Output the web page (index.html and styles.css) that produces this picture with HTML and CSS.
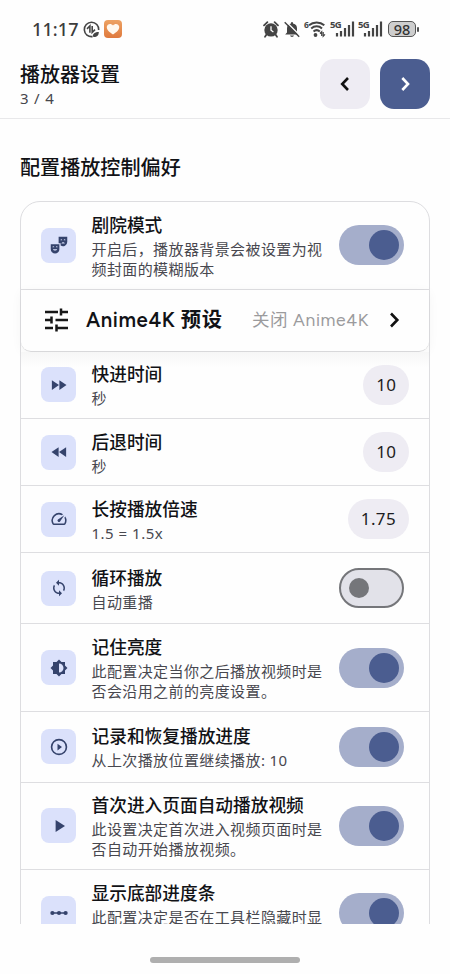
FILE: index.html
```html
<!DOCTYPE html>
<html lang="zh-CN">
<head>
<meta charset="utf-8">
<meta name="viewport" content="width=device-width, initial-scale=1">
<title>播放器设置</title>
<link rel="stylesheet" href="styles.css">
</head>
<body>
<div class="status">
  <span class="clock">11:17</span>
  <svg class="s-data" width="17" height="17" viewBox="0 0 17 17" fill="none" stroke="#444" stroke-width="1.6"><path d="M9.5 15.6A7.2 7.2 0 1 1 15.7 9"/><path d="M4 7.8 6.9 5V11.7M9.2 5V11.4L12 8.7" stroke-width="1.6"/><path d="M9.8 15.8C9.5 12.5 12 11 15.8 10.9 16 14.3 13.4 16.4 9.8 15.8Z" fill="#444" stroke="none"/></svg>
  <svg class="s-app" width="18" height="18" viewBox="0 0 18 18"><defs><linearGradient id="o" x2="0" y2="1"><stop stop-color="#eda263"/><stop offset="1" stop-color="#df793d"/></linearGradient></defs><rect width="18" height="18" rx="4" fill="url(#o)"/><path d="M9 14.5C5 12 2.5 9.8 2.8 6.8 3.1 3.8 7 2.8 9 5.5 11 2.8 14.9 3.8 15.2 6.8 15.5 9.8 13 12 9 14.5Z" fill="#fff8ee"/></svg>
  <span class="spacer"></span>
  <svg width="16" height="17" viewBox="0 0 16 17"><circle cx="8" cy="8.9" r="6.7" fill="#444"/><path d="M1 4.3 4.4 1.2M15 4.3 11.6 1.2M3.5 13.5 2 15.7M12.5 13.5 14 15.7" stroke="#444" stroke-width="1.8" stroke-linecap="round"/><path d="M8 5.2V9.2L10.4 11" stroke="#fff" stroke-width="1.3" fill="none"/></svg>
  <svg class="s-bell" width="16" height="17" viewBox="0 0 16 17"><path d="M7 1.3h2v1.2C12 3 13 5 13 7.5v4l1.8 2H1.2l1.8-2v-4C3 5 4 3 7 2.5ZM6 14.5h4C9.6 16.4 6.4 16.4 6 14.5Z" fill="#444"/><path d="M1.5 0 16.5 15" stroke="#fff" stroke-width="1.4"/><path d="M.7 1.2 15.2 15.7" stroke="#444" stroke-width="1.4"/></svg>
  <svg class="s-wifi" width="22" height="18" viewBox="0 0 22 18"><text x="0" y="7.5" class="tiny">6</text><g fill="none" stroke="#444" stroke-width="2"><path d="M5 5.2C9.3 1.5 16 1.5 20.3 5.2M7.2 8.4C10.4 5.6 15 5.6 18 8.4M9.5 11.6C11.4 9.9 14 9.9 15.8 11.6"/></g><circle cx="11.5" cy="15" r="1.9" fill="#444"/><path d="M16 13.5 17.7 11.8V16M19.2 12V16.2L21 14.3" fill="none" stroke="#444" stroke-width="1.2"/></svg>
  <svg class="s-sig" width="24" height="18" viewBox="0 0 24 18"><text x="0" y="8" class="tiny g">5G</text><path d="M7 16.5V13M11 16.5V11M15 16.5V8M19 16.5V5M23 16.5V1.5" stroke="#444" stroke-width="2.2"/></svg>
  <svg class="s-sig" width="24" height="18" viewBox="0 0 24 18"><text x="0" y="8" class="tiny g">5G</text><path d="M7 16.5V13M11 16.5V11M15 16.5V8M19 16.5V5M23 16.5V1.5" stroke="#444" stroke-width="2.2"/></svg>
  <span class="battery">98</span><span class="cap"></span>
</div>

<header class="header">
  <div class="heading"><h1>播放器设置</h1><p>3 / 4</p></div>
  <button class="nav"><svg width="20" height="20" viewBox="0 0 20 20"><path d="M13 4 7.2 10 13 16"/></svg></button>
  <button class="nav next"><svg width="20" height="20" viewBox="0 0 20 20"><path d="M7.3 4 13 10 7.3 16"/></svg></button>
</header>

<main class="content">
  <h2>配置播放控制偏好</h2>
  <section class="card">
    <div class="row tall first">
      <span class="icon"><svg viewBox="0 0 24 24"><path fill-rule="evenodd" d="M1 11h11.5v6.5a5.75 5.75 0 0 1-11.5 0ZM3.3 15h2.4a1.2 1.2 0 0 0-2.4 0ZM7.8 15h2.4a1.2 1.2 0 0 0-2.4 0ZM3.9 17.5c1 2.6 4.7 2.6 5.7 0Z"/><path fill-rule="evenodd" d="M11.5 1H23v7a5.7 5.7 0 0 1-8.8 4.8V9.5H11.5ZM14 5.5h2.3a1.1 1.1 0 0 0-2.3 0ZM18.3 5.5h2.3a1.1 1.1 0 0 0-2.3 0ZM15.2 10h4.6c-.8-2.2-3.8-2.2-4.6 0Z"/></svg></span>
      <div class="text"><h3>剧院模式</h3><p>开启后，播放器背景会被设置为视频封面的模糊版本</p></div>
      <span class="switch on"></span>
    </div>
    <div class="preset">
      <svg width="24" height="24" viewBox="0 0 24 24" fill="none" stroke="#171717" stroke-width="2.5"><path d="M1 4H14M17 .5V7.5M17 4H24M1 12H7M7.5 8.5V15.5M11.5 12H24M1 20H9M12.5 16.5V23.5M12.5 20H24"/></svg>
      <h3>Anime4K 预设</h3><span class="value">关闭 Anime4K</span>
      <svg class="chev" width="20" height="20" viewBox="0 0 20 20"><path d="M7 3.5 13.3 10 7 16.5"/></svg>
    </div>
    <div class="row shaded">
      <span class="icon"><svg viewBox="0 0 24 24"><path d="m2.5 5.5 9.5 6.5-9.5 6.5ZM12.5 5.5l9.5 6.5-9.5 6.5Z"/></svg></span>
      <div class="text"><h3>快进时间</h3><p>秒</p></div><span class="pill">10</span>
    </div>
    <div class="row">
      <span class="icon"><svg viewBox="0 0 24 24"><path d="m21.5 5.5-9.5 6.5 9.5 6.5ZM11.5 5.5l-9.5 6.5 9.5 6.5Z"/></svg></span>
      <div class="text"><h3>后退时间</h3><p>秒</p></div><span class="pill">10</span>
    </div>
    <div class="row">
      <span class="icon"><svg viewBox="0 0 24 24"><path d="m20.38 8.57-1.23 1.85a8 8 0 0 1-.22 7.58H5.07A8 8 0 0 1 15.58 6.85l1.85-1.23A10 10 0 0 0 3.35 19a2 2 0 0 0 1.72 1h13.85a2 2 0 0 0 1.74-1 10 10 0 0 0-.27-10.44Z"/><path d="M10.59 15.41a2 2 0 0 0 2.83 0l5.66-8.49-8.49 5.66a2 2 0 0 0 0 2.83Z"/></svg></span>
      <div class="text"><h3>长按播放倍速</h3><p class="latin">1.5 = 1.5x</p></div><span class="pill wide">1.75</span>
    </div>
    <div class="row mid">
      <span class="icon"><svg viewBox="0 0 24 24"><path d="M12 4V1L8 5l4 4V6c3.31 0 6 2.69 6 6 0 1.01-.25 1.97-.7 2.8l1.46 1.46A7.93 7.93 0 0 0 20 12c0-4.42-3.58-8-8-8Zm0 14c-3.31 0-6-2.69-6-6 0-1.01.25-1.97.7-2.8L5.24 7.74A7.93 7.93 0 0 0 4 12c0 4.42 3.58 8 8 8v3l4-4-4-4v3Z"/></svg></span>
      <div class="text"><h3>循环播放</h3><p>自动重播</p></div><span class="switch"></span>
    </div>
    <div class="row tall">
      <span class="icon"><svg viewBox="0 0 24 24"><path fill-rule="evenodd" d="M20 15.31 23.31 12 20 8.69V4h-4.69L12 .69 8.69 4H4v4.69L.69 12 4 15.31V20h4.69L12 23.31 15.31 20H20v-4.69ZM12 18V6c3.31 0 6 2.69 6 6s-2.69 6-6 6Z"/></svg></span>
      <div class="text"><h3>记住亮度</h3><p>此配置决定当你之后播放视频时是否会沿用之前的亮度设置。</p></div><span class="switch on"></span>
    </div>
    <div class="row mid">
      <span class="icon"><svg viewBox="0 0 24 24"><path fill-rule="evenodd" d="M10 16.5l6-4.5-6-4.5v9ZM12 1a11 11 0 1 0 0 22 11 11 0 0 0 0-22Zm0 19.8a8.8 8.8 0 1 1 0-17.6 8.8 8.8 0 0 1 0 17.6Z"/></svg></span>
      <div class="text"><h3>记录和恢复播放进度</h3><p>从上次播放位置继续播放: 10</p></div><span class="switch on"></span>
    </div>
    <div class="row tall">
      <span class="icon"><svg viewBox="0 0 24 24"><path d="M7.5 4v16L20 12Z"/></svg></span>
      <div class="text"><h3>首次进入页面自动播放视频</h3><p>此设置决定首次进入视频页面时是否自动开始播放视频。</p></div><span class="switch on"></span>
    </div>
    <div class="row tall">
      <span class="icon"><svg viewBox="0 0 24 24"><path d="M3 11h18v2H3Z"/><circle cx="3.2" cy="12" r="2.8"/><circle cx="12" cy="12" r="2.8"/><circle cx="20.8" cy="12" r="2.8"/></svg></span>
      <div class="text"><h3>显示底部进度条</h3><p class="two-lines">此配置决定是否在工具栏隐藏时显</p></div><span class="switch on"></span>
    </div>
  </section>
</main>
<footer class="home"><span></span></footer>
</body>
</html>
```

FILE: styles.css
```css
* { box-sizing: border-box; }
body {
  margin: 0; width: 450px; height: 974px; overflow: hidden;
  display: flex; flex-direction: column;
  background: #fefefe; color: #111216;
  font-family: "Noto Sans", "Noto Sans CJK SC", sans-serif;
}
h1, h2, h3, p { margin: 0; font-weight: 500; }
h1, h2, h3 { font-family: "Noto Sans CJK SC", sans-serif; }
.status { height: 58px; flex: none; display: flex; align-items: center; padding: 0 31px 0 32px; }
.status svg { overflow: visible; }
.clock { width: 51px; font: 500 18px/20px "Noto Sans"; color: #3c3c3c; letter-spacing: .1px; }
.s-app { margin-left: 4px; }
.spacer { flex: 1; }
.s-bell { margin-left: 5px; }
.s-wifi { margin-left: 4px; }
.s-sig { margin-left: 4px; }
.tiny { font: 700 8.5px "Noto Sans"; fill: #444; letter-spacing: -.3px; }
.g { font-size: 9.5px; letter-spacing: -.8px; }
.battery {
  width: 28px; height: 16px; margin-left: 6px; border: 1.5px solid #555; border-radius: 5px;
  background: #cecece; color: #333; font: 500 14.5px/14px "Noto Sans"; text-align: center;
}
.cap { width: 2px; height: 5px; margin-left: 1px; background: #555; border-radius: 1px; }
.header {
  height: 61px; flex: none; display: flex; gap: 10px; padding: 1px 20px 0;
  border-bottom: 1px solid #e8e8ea;
}
.heading { flex: 1; padding-top: 1px; }
h1 { font-size: 20px; line-height: 28px; }
.heading p { font-size: 15px; line-height: 20px; color: #46464c; letter-spacing: .8px; font-weight: 400; }
.nav {
  width: 50px; height: 50px; padding: 0; border: 0; border-radius: 14px; background: #eeecf3;
  display: grid; place-items: center;
}
.nav path, .chev path { fill: none; stroke: #111; stroke-width: 2.6; }
.next { background: #4b5d90; }
.nav.next path { stroke: #fff; }
.content { height: 805px; flex: none; overflow: hidden; padding: 0 20px; }
h2 { height: 82px; padding-top: 33px; font-size: 20.1px; line-height: 29px; }
.card { border: 1px solid #dddde0; border-radius: 20px 20px 0 0; }
.row {
  height: 67.2px; padding: 0 20px; display: flex; align-items: center;
  border-bottom: 1px solid #dedee1;
}
.mid { height: 71.1px; }
.tall { height: 87.3px; }
.first { height: 87.8px; }
.shaded { background: linear-gradient(#f6f6f6, #fefefe 16px); }
.icon {
  width: 35px; height: 35px; flex: none; margin-right: 15.5px; border-radius: 8px;
  background: #dbe1fb; display: grid; place-items: center;
}
.icon svg { width: 18px; height: 18px; fill: #35436c; }
.text { flex: 1; padding-top: 1px; }
.row h3 { font-size: 17.7px; line-height: 23px; margin-bottom: 3px; }
.row p { width: 234px; font-size: 15px; line-height: 20px; letter-spacing: .4px; color: #48484f; font-weight: 400; }
.row .latin { letter-spacing: .5px; }
.two-lines { min-height: 40px; }
.switch {
  width: 65px; height: 40px; flex: none; margin-right: 5px; border-radius: 20px;
  border: 2.5px solid #75767a; background: #e2e2e9; display: flex; align-items: center; padding-left: 8px;
}
.switch::before { content: ""; width: 20px; height: 20px; border-radius: 50%; background: #75767a; }
.on { border: 0; background: #a5aecb; padding-left: 30px; }
.on::before { width: 30px; height: 30px; background: #4b5d90; }
.pill {
  height: 40px; padding: 0 13px; border-radius: 20px; background: #eeecf3; color: #1d1d22;
  font-size: 17px; line-height: 40px; letter-spacing: .1px;
}
.wide { letter-spacing: .35px; }
.preset {
  height: 62px; display: flex; align-items: center; padding: 0 25px 0 23px;
  border-bottom: 1px solid #d8d8da; border-radius: 0 0 10px 10px;
  box-shadow: 0 2px 12px #0000000b;
}
.preset h3 {
  margin-left: 18px; white-space: nowrap; letter-spacing: .6px;
  font: 600 20.3px/28px Figtree, "Noto Sans", "Noto Sans CJK SC", sans-serif;
}
.value {
  flex: 1; text-align: right; margin-right: 15px; color: #9b9b9d; white-space: nowrap;
  font: 400 17.5px/28px Figtree, "Noto Sans", "Noto Sans CJK SC", sans-serif; letter-spacing: .6px;
}
.home { flex: 1; display: flex; justify-content: center; padding-top: 33px; }
.home span { width: 150px; height: 6px; border-radius: 3px; background: #afafaf; }
```
